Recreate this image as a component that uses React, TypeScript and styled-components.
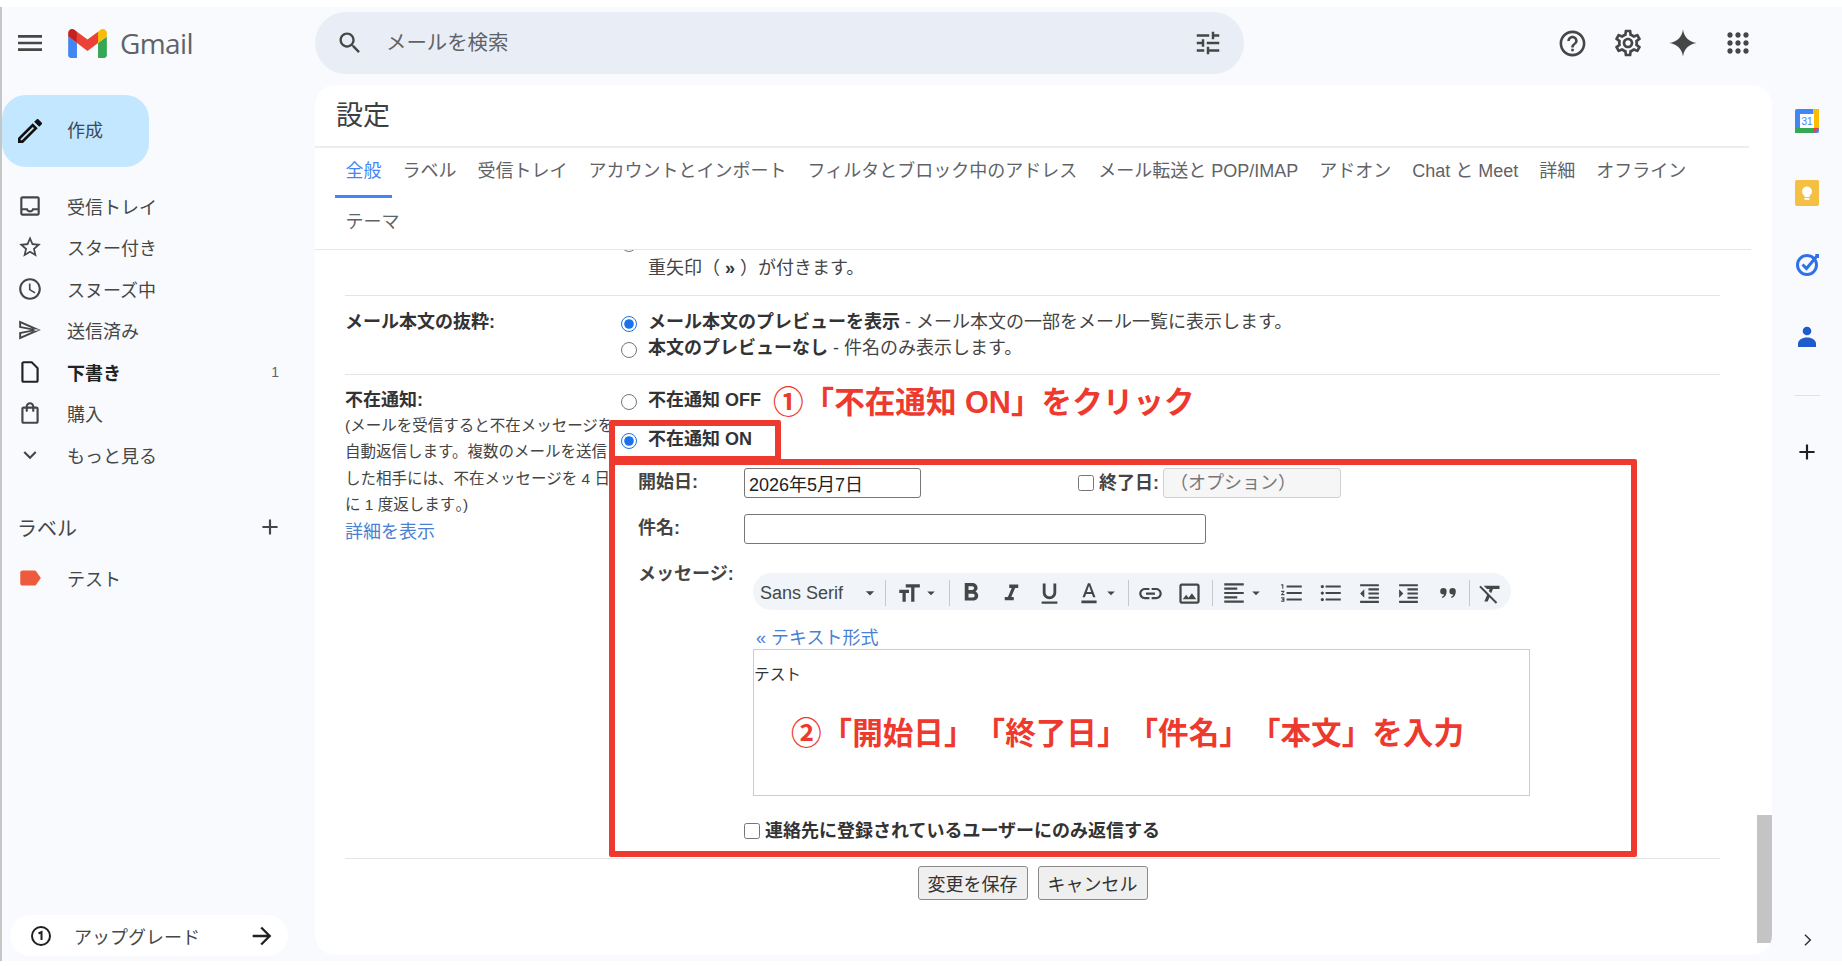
import React from 'react';
import styled, { createGlobalStyle } from 'styled-components';

const FONT = `"Liberation Sans", "Noto Sans CJK JP", sans-serif`;

const GlobalStyle = createGlobalStyle`
  html, body {
    margin: 0;
    padding: 0;
    background: #fff;
    font-family: ${FONT};
    overflow: hidden;
    text-spacing-trim: space-all;
  }
  * { box-sizing: border-box; }
`;

const Shell = styled.div`
  width: 1842px;
  height: 954px;
  margin-top: 7px;
  background: #f8fafd;
  border-left: 2px solid #c4c7c5;
  display: flex;
  flex-direction: column;
`;

const TopBar = styled.header`
  height: 78px;
  flex: none;
  display: flex;
  align-items: flex-start;
`;

const Brand = styled.div`
  width: 313px;
  height: 72px;
  flex: none;
  display: flex;
  align-items: center;
  padding-left: 12px;
`;

const GmailWord = styled.span`
  font-family: "Open Sans", sans-serif;
  font-size: 28px;
  letter-spacing: -0.6px;
  color: #5f6368;
  margin-left: 13px;
`;

const LogoBox = styled.svg`
  width: 39px;
  height: 29px;
  margin-left: 22px;
`;

const SearchBox = styled.div`
  width: 929px;
  height: 62px;
  margin-top: 5px;
  border-radius: 31px;
  background: #e9eef6;
  display: flex;
  align-items: center;
  padding: 0 21px 0 21px;
  color: #444746;
`;

const SearchText = styled.span`
  flex: 1;
  margin-left: 22px;
  padding-bottom: 5px;
  font-size: 20.4px;
  color: #5f6368;
`;

const Actions = styled.div`
  flex: 1;
  height: 72px;
  display: flex;
  align-items: center;
  gap: 24px;
  padding-left: 313px;
  color: #444746;
`;

const Body = styled.div`
  flex: 1;
  min-height: 0;
  display: flex;
`;

const Sidebar = styled.aside`
  width: 313px;
  flex: none;
  display: flex;
  flex-direction: column;
  padding-bottom: 5px;
`;

const Compose = styled.div`
  width: 147px;
  height: 72px;
  margin-top: 10px;
  border-radius: 24px;
  background: #c2e7ff;
  display: flex;
  align-items: center;
  gap: 21px;
  padding-left: 12px;
  font-size: 18px;
  color: #3c4a57;
`;

const ComposeText = styled.span`
  padding-bottom: 5px;
`;

const NavList = styled.nav`
  margin-top: 18px;
  display: flex;
  flex-direction: column;
`;

const NavRow = styled.div<{ $bold?: boolean }>`
  height: 41.5px;
  display: flex;
  align-items: center;
  gap: 24px;
  padding: 0 36px 0 15px;
  font-size: 18px;
  color: ${(p) => (p.$bold ? '#222' : '#444746')};
  font-weight: ${(p) => (p.$bold ? 700 : 400)};
`;

const NavLabel = styled.span`
  flex: 1;
`;

const NavCount = styled.span`
  font-size: 14px;
  font-weight: 400;
  color: #5f6368;
`;

const LabelsHead = styled.div`
  margin-top: 31px;
  height: 41px;
  display: flex;
  align-items: center;
  justify-content: space-between;
  padding: 0 32px 0 15px;
  font-size: 20px;
  color: #444746;
`;

const LabelRow = styled(NavRow)`
  margin-top: 10px;
`;

const Upgrade = styled.div`
  margin: auto 0 0 8px;
  width: 278px;
  height: 41px;
  border-radius: 21px;
  background: #fff;
  display: flex;
  align-items: center;
  padding: 0 12px 0 20px;
  font-size: 18px;
  color: #444746;
`;

const UpgradeText = styled.span`
  flex: 1;
  margin-left: 22px;
`;

const Panel = styled.main`
  width: 1457px;
  height: 870px;
  flex: none;
  background: #fff;
  border-radius: 20px;
  overflow: hidden;
  position: relative;
  display: flex;
  flex-direction: column;
`;

const PanelTitle = styled.h1`
  margin: 0 23px 0 0;
  height: 63px;
  flex: none;
  padding: 15px 0 0 21px;
  font-size: 27px;
  font-weight: 400;
  line-height: 32px;
  color: #3c4043;
  border-bottom: 2px solid #ededed;
`;

const Tabs = styled.div`
  margin-right: 21px;
  flex: none;
  padding-left: 20px;
  display: flex;
  flex-wrap: wrap;
  row-gap: 1px;
  border-bottom: 1px solid #e6e6e6;
`;

const Tab = styled.div<{ $active?: boolean }>`
  height: 50px;
  padding: 10px 10.5px 0;
  font-size: 18px;
  line-height: 26px;
  white-space: nowrap;
  color: ${(p) => (p.$active ? '#4285f4' : '#5f6368')};
  border-bottom: 3px solid ${(p) => (p.$active ? '#4285f4' : 'transparent')};
`;

const Scroller = styled.div`
  flex: 1;
  min-height: 0;
  overflow: hidden;
  padding: 0 52px 0 30px;
`;

const Row = styled.section<{ $clipped?: boolean }>`
  display: grid;
  grid-template-columns: 276px 1fr;
  border-bottom: 1px solid #e4e4e4;
  padding: ${(p) => (p.$clipped ? '0 0 14px' : '13px 0 13px')};
  margin-top: ${(p) => (p.$clipped ? '-21px' : '0')};
  font-size: 18px;
  line-height: 26px;
  color: #444;
`;

const RowWide = styled(Row)`
  padding: 12px 0 0;
`;

const RowLabel = styled.div`
  font-weight: 700;
  color: #333;
`;

const RowNote = styled.div`
  font-size: 15.5px;
  font-weight: 400;
  line-height: 26.4px;
  color: #444;
  white-space: nowrap;
  overflow: hidden;
  width: 268px;
`;

const TightStop = styled.span`
  font-feature-settings: "palt";
`;

const NoteLink = styled.div`
  font-weight: 400;
  color: #4a7fd4;
`;

const Option = styled.label`
  display: flex;
  align-items: flex-start;
  gap: 11px;
  white-space: nowrap;
  position: relative;
`;

const OptionWrapped = styled.div`
  margin-left: 27px;
  white-space: nowrap;
`;

const Radio = styled.input.attrs({ type: 'radio' })`
  width: 16px;
  height: 16px;
  margin: 7px 0 0;
  flex: none;
  accent-color: #1a73e8;
`;

const Strong = styled.b`
  font-weight: 700;
  color: #333;
`;

const OnOption = styled(Option)`
  margin-top: 13px;
`;

const RedFrame = styled.div`
  position: absolute;
  border: 6px solid #ee3a2e;
  border-radius: 2px;
  pointer-events: none;
`;

const OnFrame = styled(RedFrame)`
  left: -12px;
  top: -6px;
  width: 172px;
  height: 42px;
`;

const FormFrame = styled(RedFrame)`
  left: -12px;
  top: -9px;
  width: 1028px;
  height: 398px;
`;

const Callout = styled.div`
  position: absolute;
  font-size: 30.6px;
  line-height: 40px;
  font-weight: 700;
  color: #ee3a2e;
  white-space: nowrap;
`;

const OffCallout = styled(Callout)`
  left: 152px;
  top: -5px;
`;

const BodyCallout = styled(Callout)`
  left: 37px;
  top: 63px;
`;

const Form = styled.div`
  position: relative;
  margin-top: 16px;
  padding-left: 17px;
  display: flex;
  flex-direction: column;
`;

const FormRow = styled.div`
  display: grid;
  grid-template-columns: 106px 1fr;
  margin-bottom: 16px;
  align-items: center;
`;

const MessageRow = styled(FormRow)`
  align-items: flex-start;
  margin-bottom: 0;
`;

const FormLabel = styled.span`
  font-weight: 700;
  color: #444;
  margin-top: -2px;
`;

const MessageLabel = styled(FormLabel)`
  margin-top: 1px;
`;

const DateLine = styled.div`
  display: flex;
  align-items: center;
`;

const TextInput = styled.input<{ $width: number }>`
  width: ${(p) => p.$width}px;
  height: 30px;
  padding: 0 4px;
  border: 1px solid #767676;
  border-radius: 3px;
  background: #fff;
  font-family: ${FONT};
  font-size: 18px;
  color: #222;
  outline: none;
  &:disabled {
    background: #f6f6f6;
    border-color: #d0d0d0;
    padding-left: 6px;
  }
  &::placeholder {
    color: #777;
  }
`;

const CheckBox = styled.input.attrs({ type: 'checkbox' })`
  width: 16px;
  height: 16px;
  margin: 0;
  flex: none;
`;

const EndDate = styled.label`
  display: flex;
  align-items: center;
  gap: 5px;
  margin-left: 157px;
  margin-right: 5px;
  font-weight: 700;
  color: #444;
  white-space: nowrap;
  width: 80px;
`;

const Composer = styled.div`
  margin-top: 13px;
  padding-left: 9px;
`;

const Toolbar = styled.div`
  width: 758px;
  height: 37px;
  padding-top: 3px;
  border-radius: 19px;
  background: #f1f4f9;
  display: flex;
  align-items: center;
  color: #444746;
`;

const FontName = styled.span`
  margin-left: 7px;
  width: 101px;
  font-size: 18px;
  color: #444746;
`;

const ToolSep = styled.span`
  width: 1px;
  height: 26px;
  background: #c8c8c8;
  flex: none;
`;

const ToolButton = styled.span<{ $w: number; $pad?: number }>`
  width: ${(p) => p.$w}px;
  padding-right: ${(p) => p.$pad ?? 0}px;
  flex: none;
  display: flex;
  align-items: center;
  justify-content: center;
`;

const PlainLink = styled.div`
  margin: 16px 0 -1px 3px;
  line-height: 24px;
  font-size: 18px;
  color: #4a7fd4;
`;

const Editor = styled.div`
  position: relative;
  width: 777px;
  height: 147px;
  border: 1px solid #ccc;
  padding: 14px 0 0 0;
  font-size: 15.7px;
  line-height: 22px;
  color: #333;
`;

const OnlyContacts = styled.label`
  display: flex;
  align-items: center;
  gap: 5px;
  margin: 22px 0 14px 106px;
  height: 26px;
  font-weight: 700;
  color: #333;
`;

const FormButtons = styled.div`
  display: flex;
  justify-content: center;
  gap: 10px;
  padding-top: 7px;
`;

const Btn = styled.button`
  width: 110px;
  height: 34px;
  padding: 0;
  border: 1px solid #8a8a8a;
  border-radius: 3px;
  background: #efefef;
  font-family: ${FONT};
  font-size: 18px;
  color: #333;
`;

const ScrollThumb = styled.div`
  position: absolute;
  right: 0;
  top: 730px;
  width: 15px;
  height: 128px;
  background: #c4c4c4;
`;

const Rail = styled.aside`
  flex: 1;
  display: flex;
  flex-direction: column;
  align-items: center;
`;

const RailIcon = styled.div`
  height: 72px;
  display: flex;
  align-items: center;
  justify-content: center;
  flex: none;
`;

const RailSep = styled.div`
  width: 26px;
  height: 1px;
  background: #dfe1e4;
  margin-top: 22px;
`;

const RailAdd = styled.div`
  margin-top: 43px;
  color: #1f1f1f;
  display: flex;
`;

const RailChevron = styled.div`
  margin-top: auto;
  margin-bottom: 12px;
  color: #333;
  display: flex;
`;

type IconProps = { d: string; size?: number; color?: string };

const Icon: React.FC<IconProps> = ({ d, size = 26, color = 'currentColor' }) => (
  <svg width={size} height={size} viewBox="0 0 24 24" fill={color} style={{ flex: 'none' }}>
    <path d={d} fillRule="evenodd" />
  </svg>
);

const P = {
  menu: 'M3 18h18v-2H3v2zm0-5h18v-2H3v2zm0-7v2h18V6H3z',
  edit: 'M14.06 9.02l.92.92L5.92 19H5v-.92l9.06-9.06M17.66 3c-.25 0-.51.1-.7.29l-1.83 1.83 3.75 3.75 1.83-1.83c.39-.39.39-1.02 0-1.41l-2.34-2.34c-.2-.2-.45-.29-.71-.29zm-3.6 3.19L3 17.25V21h3.75L17.81 9.94l-3.75-3.75z',
  inbox: 'M19 3H5c-1.1 0-2 .9-2 2v14c0 1.1.9 2 2 2h14c1.1 0 2-.9 2-2V5c0-1.1-.9-2-2-2zm0 16H5v-3h3.56c.69 1.19 1.97 2 3.45 2s2.75-.81 3.45-2H19v3zm0-5h-4.99c0 1.1-.9 2-2 2s-2-.9-2-2H5V5h14v9z',
  star: 'M22 9.24l-7.19-.62L12 2 9.19 8.63 2 9.24l5.46 4.73L5.82 21 12 17.27 18.18 21l-1.63-7.03L22 9.24zM12 15.4l-3.76 2.27 1-4.28-3.32-2.88 4.38-.38L12 6.1l1.71 4.04 4.38.38-3.32 2.88 1 4.28L12 15.4z',
  clock: 'M11.99 2C6.47 2 2 6.48 2 12s4.47 10 9.99 10C17.52 22 22 17.52 22 12S17.52 2 11.99 2zM12 20c-4.42 0-8-3.58-8-8s3.58-8 8-8 8 3.58 8 8-3.58 8-8 8zm.5-13H11v6l5.25 3.15.75-1.23-4.5-2.67z',
  send: 'M2 3.2L2 10l11 2-11 2 0 6.8L22 12 2 3.2zM3.8 6l13.6 6-13.6 6 0-2.6L21 12 3.8 8.6z',
  draft: 'M14 2H6c-1.1 0-1.99.9-1.99 2L4 20c0 1.1.89 2 1.99 2H18c1.1 0 2-.9 2-2V8l-6-6zM6 20V4h7.17L18 8.83V20H6z',
  bag: 'M18 6h-2c0-2.21-1.79-4-4-4S8 3.79 8 6H6c-1.1 0-2 .9-2 2v12c0 1.1.9 2 2 2h12c1.1 0 2-.9 2-2V8c0-1.1-.9-2-2-2zm-6-2c1.1 0 2 .9 2 2h-4c0-1.1.9-2 2-2zm6 16H6V8h2v2c0 .55.45 1 1 1s1-.45 1-1V8h4v2c0 .55.45 1 1 1s1-.45 1-1V8h2v12z',
  more: 'M16.59 8.59L12 13.17 7.41 8.59 6 10l6 6 6-6z',
  add: 'M19 13h-6v6h-2v-6H5v-2h6V5h2v6h6v2z',
  label: 'M17.63 5.84C17.27 5.33 16.67 5 16 5L5 5.01C3.9 5.01 3 5.9 3 7v10c0 1.1.9 1.99 2 1.99L16 19c.67 0 1.27-.33 1.63-.84L22 12l-4.37-6.16z',
  arrow: 'M12 4l-1.41 1.41L16.17 11H4v2h12.17l-5.58 5.59L12 20l8-8z',
  search: 'M15.5 14h-.79l-.28-.27C15.41 12.59 16 11.11 16 9.5 16 5.91 13.09 3 9.5 3S3 5.91 3 9.5 5.91 16 9.5 16c1.61 0 3.09-.59 4.23-1.57l.27.28v.79l5 4.99L20.49 19l-4.99-5zm-6 0C7.01 14 5 11.99 5 9.5S7.01 5 9.5 5 14 7.01 14 9.5 11.99 14 9.5 14z',
  tune: 'M3 17v2h6v-2H3zM3 5v2h10V5H3zm10 16v-2h8v-2h-8v-2h-2v6h2zM7 9v2H3v2h4v2h2V9H7zm14 4v-2H11v2h10zm-6-4h2V7h4V5h-4V3h-2v6z',
  help: 'M11 18h2v-2h-2v2zm1-16C6.48 2 2 6.48 2 12s4.48 10 10 10 10-4.48 10-10S17.52 2 12 2zm0 18c-4.41 0-8-3.59-8-8s3.59-8 8-8 8 3.59 8 8-3.59 8-8 8zm0-14c-2.21 0-4 1.79-4 4h2c0-1.1.9-2 2-2s2 .9 2 2c0 2-3 1.75-3 5h2c0-2.25 3-2.5 3-5 0-2.21-1.79-4-4-4z',
  gear: 'M19.43 12.98c.04-.32.07-.64.07-.98 0-.34-.03-.66-.07-.98l2.11-1.65c.19-.15.24-.42.12-.64l-2-3.46c-.09-.16-.26-.25-.44-.25-.06 0-.12.01-.17.03l-2.49 1c-.52-.4-1.08-.73-1.69-.98l-.38-2.65C14.46 2.18 14.25 2 14 2h-4c-.25 0-.46.18-.49.42l-.38 2.65c-.61.25-1.17.59-1.69.98l-2.49-1c-.06-.02-.12-.03-.18-.03-.17 0-.34.09-.43.25l-2 3.46c-.13.22-.07.49.12.64l2.11 1.65c-.04.32-.07.65-.07.98 0 .33.03.66.07.98l-2.11 1.65c-.19.15-.24.42-.12.64l2 3.46c.09.16.26.25.44.25.06 0 .12-.01.17-.03l2.49-1c.52.4 1.08.73 1.69.98l.38 2.65c.03.24.24.42.49.42h4c.25 0 .46-.18.49-.42l.38-2.65c.61-.25 1.17-.59 1.69-.98l2.49 1c.06.02.12.03.18.03.17 0 .34-.09.43-.25l2-3.46c.12-.22.07-.49-.12-.64l-2.11-1.65zm-1.98-1.71c.04.31.05.52.05.73 0 .21-.02.43-.05.73l-.14 1.13.89.7 1.08.84-.7 1.21-1.27-.51-1.04-.42-.9.68c-.43.32-.84.56-1.25.73l-1.06.43-.16 1.13-.2 1.35h-1.4l-.19-1.35-.16-1.13-1.06-.43c-.43-.18-.83-.41-1.23-.71l-.91-.7-1.06.43-1.27.51-.7-1.21 1.08-.84.89-.7-.14-1.13c-.03-.31-.05-.54-.05-.74s.02-.43.05-.73l.14-1.13-.89-.7-1.08-.84.7-1.21 1.27.51 1.04.42.9-.68c.43-.32.84-.56 1.25-.73l1.06-.43.16-1.13.2-1.35h1.39l.19 1.35.16 1.13 1.06.43c.43.18.83.41 1.23.71l.91.7 1.06-.43 1.27-.51.7 1.21-1.07.85-.89.7.14 1.13zM12 8c-2.21 0-4 1.79-4 4s1.79 4 4 4 4-1.79 4-4-1.79-4-4-4zm0 6c-1.1 0-2-.9-2-2s.9-2 2-2 2 .9 2 2-.9 2-2 2z',
  spark: 'M12 1C12.6 7 17 11.4 23 12C17 12.6 12.6 17 12 23C11.4 17 7 12.6 1 12C7 11.4 11.4 7 12 1z',
  apps: 'M6 8c1.1 0 2-.9 2-2s-.9-2-2-2-2 .9-2 2 .9 2 2 2zm6 12c1.1 0 2-.9 2-2s-.9-2-2-2-2 .9-2 2 .9 2 2 2zm-6 0c1.1 0 2-.9 2-2s-.9-2-2-2-2 .9-2 2 .9 2 2 2zm0-6c1.1 0 2-.9 2-2s-.9-2-2-2-2 .9-2 2 .9 2 2 2zm6 0c1.1 0 2-.9 2-2s-.9-2-2-2-2 .9-2 2 .9 2 2 2zm6-6c1.1 0 2-.9 2-2s-.9-2-2-2-2 .9-2 2 .9 2 2 2zm-6 0c1.1 0 2-.9 2-2s-.9-2-2-2-2 .9-2 2 .9 2 2 2zm6 6c1.1 0 2-.9 2-2s-.9-2-2-2-2 .9-2 2 .9 2 2 2zm0 6c1.1 0 2-.9 2-2s-.9-2-2-2-2 .9-2 2 .9 2 2 2z',
  chevron: 'M8.6 5.6L10 4.2l7.8 7.8-7.8 7.8-1.4-1.4L15 12z',
  caret: 'M7 10l5 5 5-5z',
  size: 'M9 4v3h5v13h3V7h5V4H9zm-6 8h3v8h3v-8h3V9H3v3z',
  bold: 'M15.6 10.79c.97-.67 1.65-1.77 1.65-2.79 0-2.26-1.75-4-4-4H7v14h7.04c2.09 0 3.71-1.7 3.71-3.79 0-1.52-.86-2.82-2.15-3.42zM10 6.5h3c.83 0 1.5.67 1.5 1.5s-.67 1.5-1.5 1.5h-3v-3zm3.5 9H10v-3h3.5c.83 0 1.5.67 1.5 1.5s-.67 1.5-1.5 1.5z',
  italic: 'M10 4v3h2.21l-3.42 8H6v3h8v-3h-2.21l3.42-8H18V4z',
  underline: 'M12 17c3.31 0 6-2.69 6-6V3h-2.5v8c0 1.93-1.57 3.5-3.5 3.5S8.5 12.93 8.5 11V3H6v8c0 3.31 2.69 6 6 6zm-7 2v2h14v-2H5z',
  color: 'M5 19h14v2.5H5zM11 3L6 16h2.2l1.1-3h5.4l1.1 3H18L13 3h-2zm-1 8l2-5.6 2 5.6h-4z',
  link: 'M3.9 12c0-1.71 1.39-3.1 3.1-3.1h4V7H7c-2.76 0-5 2.24-5 5s2.24 5 5 5h4v-1.9H7c-1.71 0-3.1-1.39-3.1-3.1zM8 13h8v-2H8v2zm9-6h-4v1.9h4c1.71 0 3.1 1.39 3.1 3.1s-1.39 3.1-3.1 3.1h-4V17h4c2.76 0 5-2.24 5-5s-2.24-5-5-5z',
  image: 'M19 5v14H5V5h14m0-2H5c-1.1 0-2 .9-2 2v14c0 1.1.9 2 2 2h14c1.1 0 2-.9 2-2V5c0-1.1-.9-2-2-2zm-4.86 8.86l-3 3.87L9 13.14 6 17h12l-3.86-5.14z',
  align: 'M15 15H3v2h12v-2zm0-8H3v2h12V7zM3 13h18v-2H3v2zm0 8h18v-2H3v2zM3 3v2h18V3H3z',
  ol: 'M2 17h2v.5H3v1h1v.5H2v1h3v-4H2v1zm1-9h1V4H2v1h1v3zm-1 3h1.8L2 13.1v.9h3v-1H3.2L5 10.9V10H2v1zm5-6v2h14V5H7zm0 14h14v-2H7v2zm0-6h14v-2H7v2z',
  ul: 'M4 10.5c-.83 0-1.5.67-1.5 1.5s.67 1.5 1.5 1.5 1.5-.67 1.5-1.5-.67-1.5-1.5-1.5zm0-6c-.83 0-1.5.67-1.5 1.5S3.17 7.5 4 7.5 5.5 6.83 5.5 6 4.83 4.5 4 4.5zm0 12c-.83 0-1.5.68-1.5 1.5s.68 1.5 1.5 1.5 1.5-.68 1.5-1.5-.67-1.5-1.5-1.5zM7 19h14v-2H7v2zm0-6h14v-2H7v2zm0-8v2h14V5H7z',
  outdent: 'M11 17h10v-2H11v2zm-8-5l4 4V8l-4 4zm0 9h18v-2H3v2zM3 3v2h18V3H3zm8 6h10V7H11v2zm0 4h10v-2H11v2z',
  indent: 'M3 21h18v-2H3v2zM3 8v8l4-4-4-4zm8 9h10v-2H11v2zM3 3v2h18V3H3zm8 6h10V7H11v2zm0 4h10v-2H11v2z',
  quote: 'M10.5 10a3.5 3.5 0 1 0-3.5 3.5h.9c-.4 1.2-1.3 2.1-2.7 2.7l.7 1.3c3.2-1.2 4.6-3.8 4.6-7.5zm10 0a3.5 3.5 0 1 0-3.5 3.5h.9c-.4 1.2-1.3 2.1-2.7 2.7l.7 1.3c3.2-1.2 4.6-3.8 4.6-7.5z',
  clear: 'M3.27 5L2 6.27l6.97 6.97L6.5 19h3l1.57-3.66L16.73 21 18 19.73 3.55 5.27 3.27 5zM6 5v.18L8.82 8h2.4l-.72 1.68 2.1 2.1L14.21 8H20V5H6z',
};

const GmailLogo = () => (
  <LogoBox viewBox="52 42 88 66">
    <path fill="#4285f4" d="M58 108h14V74L52 59v43c0 3.32 2.69 6 6 6" />
    <path fill="#34a853" d="M120 108h14c3.32 0 6-2.69 6-6V59l-20 15" />
    <path fill="#fbbc04" d="M120 48v26l20-15v-8c0-7.42-8.47-11.65-14.4-7.2" />
    <path fill="#ea4335" d="M72 74V48l24 18 24-18v26L96 92" />
    <path fill="#c5221f" d="M52 51v8l20 15V48l-5.6-4.2c-5.94-4.45-14.4-.22-14.4 7.2" />
  </LogoBox>
);

const CalendarIcon = () => (
  <svg width="26" height="26" viewBox="0 0 26 26">
    <rect x="1" y="1" width="24" height="24" rx="2" fill="#4285f4" />
    <rect x="19" y="1" width="6" height="19" fill="#fbbc04" />
    <rect x="1" y="20" width="19" height="5" fill="#34a853" />
    <path d="M20 20h5l-5 5z" fill="#ea4335" />
    <rect x="6" y="6" width="14" height="14" fill="#fff" />
    <text x="13" y="17" textAnchor="middle" fontSize="10" fontFamily="Liberation Sans, sans-serif" fill="#4285f4">31</text>
  </svg>
);

const KeepIcon = () => (
  <svg width="26" height="26" viewBox="0 0 26 26">
    <rect x="1" y="0" width="24" height="26" rx="2" fill="#f4bf42" />
    <circle cx="13" cy="11.5" r="5" fill="#fff" />
    <rect x="10.5" y="14" width="5" height="3" fill="#fff" />
    <rect x="10.5" y="18" width="5" height="1.8" fill="#fff" />
  </svg>
);

const TasksIcon = () => (
  <svg width="26" height="26" viewBox="0 0 26 26" fill="none">
    <circle cx="13" cy="13" r="9.5" stroke="#2f72e8" strokeWidth="3" />
    <path d="M8.5 12.5l4 4L23 4" stroke="#2f72e8" strokeWidth="3" />
    <path d="M21 2h4v4l-2 0z" fill="#2f72e8" />
  </svg>
);

const ContactsIcon = () => (
  <svg width="26" height="26" viewBox="0 0 26 26">
    <circle cx="13" cy="7" r="4.3" fill="#1f5bcc" />
    <path d="M4 23v-3c0-4 4-6.5 9-6.5s9 2.5 9 6.5v3z" fill="#1f5bcc" />
  </svg>
);

const UpgradeIcon = () => (
  <svg width="22" height="22" viewBox="0 0 22 22" fill="none">
    <circle cx="11" cy="11" r="9" stroke="#1f1f1f" strokeWidth="2" />
    <path d="M8.5 8.5L11.5 7v8" stroke="#1f1f1f" strokeWidth="2" />
  </svg>
);

const NAV_ITEMS = [
  { icon: P.inbox, text: '受信トレイ' },
  { icon: P.star, text: 'スター付き' },
  { icon: P.clock, text: 'スヌーズ中' },
  { icon: P.send, text: '送信済み' },
  { icon: P.draft, text: '下書き', bold: true, count: '1' },
  { icon: P.bag, text: '購入' },
  { icon: P.more, text: 'もっと見る' },
];

const TAB_ITEMS = [
  '全般',
  'ラベル',
  '受信トレイ',
  'アカウントとインポート',
  'フィルタとブロック中のアドレス',
  'メール転送と POP/IMAP',
  'アドオン',
  'Chat と Meet',
  '詳細',
  'オフライン',
  'テーマ',
];

const TOOLS: { w: number; d: string; size: number; caret?: boolean; pad?: number }[][] = [
  [{ w: 63, d: P.size, size: 26, caret: true }],
  [
    { w: 42, d: P.bold, size: 30 },
    { w: 38, d: P.italic, size: 27 },
    { w: 38, d: P.underline, size: 27 },
    { w: 60, d: P.color, size: 26, caret: true },
  ],
  [
    { w: 42, d: P.link, size: 27 },
    { w: 41, d: P.image, size: 27, pad: 5 },
  ],
  [
    { w: 59, d: P.align, size: 26, caret: true },
    { w: 39, d: P.ol, size: 26 },
    { w: 39, d: P.ul, size: 26 },
    { w: 39, d: P.outdent, size: 25 },
    { w: 38, d: P.indent, size: 25 },
    { w: 42, d: P.quote, size: 22 },
  ],
  [{ w: 41, d: P.clear, size: 27 }],
];

const EditorToolbar = () => (
  <Toolbar>
    <FontName>Sans Serif</FontName>
    <Icon d={P.caret} size={20} />
    <ToolButton $w={5} />
    {TOOLS.map((group, i) => (
      <React.Fragment key={i}>
        <ToolSep />
        {group.map((t) => (
          <ToolButton key={t.d} $w={t.w} $pad={t.pad}>
            <Icon d={t.d} size={t.size} />
            {t.caret && <Icon d={P.caret} size={18} />}
          </ToolButton>
        ))}
      </React.Fragment>
    ))}
  </Toolbar>
);

export default function App() {
  return (
    <>
      <GlobalStyle />
      <Shell>
        <TopBar>
          <Brand>
            <Icon d={P.menu} size={32} color="#444746" />
            <GmailLogo />
            <GmailWord>Gmail</GmailWord>
          </Brand>
          <SearchBox>
            <Icon d={P.search} size={28} />
            <SearchText>メールを検索</SearchText>
            <Icon d={P.tune} size={30} />
          </SearchBox>
          <Actions>
            <Icon d={P.help} size={31} />
            <Icon d={P.gear} size={32} />
            <Icon d={P.spark} size={30} />
            <Icon d={P.apps} size={32} />
          </Actions>
        </TopBar>
        <Body>
          <Sidebar>
            <Compose>
              <Icon d={P.edit} size={32} color="#111" />
              <ComposeText>作成</ComposeText>
            </Compose>
            <NavList>
              {NAV_ITEMS.map((item) => (
                <NavRow key={item.text} $bold={item.bold}>
                  <Icon d={item.icon} />
                  <NavLabel>{item.text}</NavLabel>
                  {item.count && <NavCount>{item.count}</NavCount>}
                </NavRow>
              ))}
            </NavList>
            <LabelsHead>
              ラベル
              <Icon d={P.add} size={26} />
            </LabelsHead>
            <LabelRow>
              <Icon d={P.label} color="#ee5a3e" />
              <NavLabel>テスト</NavLabel>
            </LabelRow>
            <Upgrade>
              <UpgradeIcon />
              <UpgradeText>アップグレード</UpgradeText>
              <Icon d={P.arrow} size={28} color="#222" />
            </Upgrade>
          </Sidebar>
          <Panel>
            <PanelTitle>設定</PanelTitle>
            <Tabs>
              {TAB_ITEMS.map((t, i) => (
                <Tab key={t} $active={i === 0}>{t}</Tab>
              ))}
            </Tabs>
            <Scroller>
              <Row $clipped>
                <div />
                <div>
                  <Option>
                    <Radio name="mark" />
                    <span>
                      <Strong>マークを表示</Strong> - 自分を含むメーリング リスト宛のメールには矢印（ › ）が付き、自分だけに送信されたメールには二
                    </span>
                  </Option>
                  <OptionWrapped>重矢印（ <Strong>»</Strong> ）が付きます。</OptionWrapped>
                </div>
              </Row>
              <Row>
                <RowLabel>メール本文の抜粋:</RowLabel>
                <div>
                  <Option>
                    <Radio name="snippet" defaultChecked />
                    <span><Strong>メール本文のプレビューを表示</Strong> - メール本文の一部をメール一覧に表示します。</span>
                  </Option>
                  <Option>
                    <Radio name="snippet" />
                    <span><Strong>本文のプレビューなし</Strong> - 件名のみ表示します。</span>
                  </Option>
                </div>
              </Row>
              <RowWide>
                <RowLabel>
                  不在通知:
                  <RowNote>
                    (メールを受信すると不在メッセージを<br />
                    自動返信します。複数のメールを送信<br />
                    した相手には、不在メッセージを 4 日<br />
                    に 1 度返します<TightStop>。)</TightStop>
                  </RowNote>
                  <NoteLink>詳細を表示</NoteLink>
                </RowLabel>
                <div>
                  <Option>
                    <Radio name="vacation" />
                    <Strong>不在通知 OFF</Strong>
                    <OffCallout>①「不在通知 ON」をクリック</OffCallout>
                  </Option>
                  <OnOption>
                    <Radio name="vacation" defaultChecked />
                    <Strong>不在通知 ON</Strong>
                    <OnFrame />
                  </OnOption>
                  <Form>
                    <FormFrame />
                    <FormRow>
                      <FormLabel>開始日:</FormLabel>
                      <DateLine>
                        <TextInput $width={177} defaultValue="2026年5月7日" />
                        <EndDate>
                          <CheckBox />
                          終了日:
                        </EndDate>
                        <TextInput $width={178} disabled placeholder="（オプション）" />
                      </DateLine>
                    </FormRow>
                    <FormRow>
                      <FormLabel>件名:</FormLabel>
                      <TextInput $width={462} />
                    </FormRow>
                    <MessageRow>
                      <MessageLabel>メッセージ:</MessageLabel>
                      <Composer>
                        <EditorToolbar />
                        <PlainLink>« テキスト形式</PlainLink>
                        <Editor>
                          テスト
                          <BodyCallout>②「開始日」「終了日」「件名」「本文」を入力</BodyCallout>
                        </Editor>
                      </Composer>
                    </MessageRow>
                    <OnlyContacts>
                      <CheckBox />
                      連絡先に登録されているユーザーにのみ返信する
                    </OnlyContacts>
                  </Form>
                </div>
              </RowWide>
              <FormButtons>
                <Btn>変更を保存</Btn>
                <Btn>キャンセル</Btn>
              </FormButtons>
            </Scroller>
            <ScrollThumb />
          </Panel>
          <Rail>
            <RailIcon><CalendarIcon /></RailIcon>
            <RailIcon><KeepIcon /></RailIcon>
            <RailIcon><TasksIcon /></RailIcon>
            <RailIcon><ContactsIcon /></RailIcon>
            <RailSep />
            <RailAdd><Icon d={P.add} size={26} /></RailAdd>
            <RailChevron><Icon d={P.chevron} size={18} /></RailChevron>
          </Rail>
        </Body>
      </Shell>
    </>
  );
}
